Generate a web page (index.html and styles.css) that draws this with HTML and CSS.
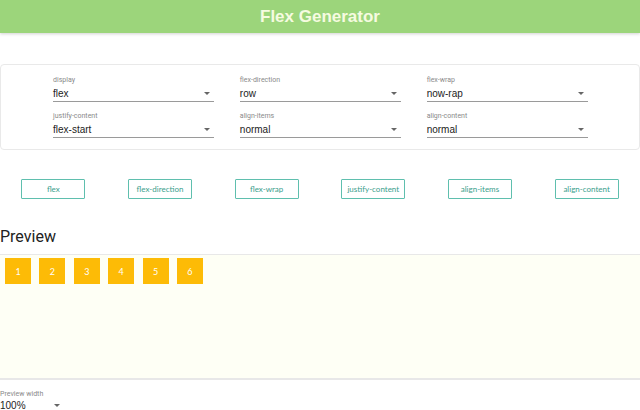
FILE: index.html
```html
<!DOCTYPE html>
<html>
<head>
<meta charset="utf-8">
<link rel="stylesheet" href="styles.css">
</head>
<body>
<header class="topbar"><h1 class="title">Flex Generator</h1></header>

<section class="panel">
  <div class="grid">
    <div class="field"><div class="label">display</div><div class="value"><span>flex</span><span class="arrow"></span></div></div>
    <div class="field"><div class="label">flex-direction</div><div class="value"><span>row</span><span class="arrow"></span></div></div>
    <div class="field"><div class="label">flex-wrap</div><div class="value"><span>now-rap</span><span class="arrow"></span></div></div>
    <div class="field"><div class="label">justify-content</div><div class="value"><span>flex-start</span><span class="arrow"></span></div></div>
    <div class="field"><div class="label">align-items</div><div class="value"><span>normal</span><span class="arrow"></span></div></div>
    <div class="field"><div class="label">align-content</div><div class="value"><span>normal</span><span class="arrow"></span></div></div>
  </div>
</section>

<nav class="buttons">
  <button class="btn">flex</button>
  <button class="btn">flex-direction</button>
  <button class="btn">flex-wrap</button>
  <button class="btn">justify-content</button>
  <button class="btn">align-items</button>
  <button class="btn">align-content</button>
</nav>

<h2 class="heading">Preview</h2>
<div class="preview">
  <div class="item">1</div>
  <div class="item">2</div>
  <div class="item">3</div>
  <div class="item">4</div>
  <div class="item">5</div>
  <div class="item">6</div>
</div>

<div class="width-field">
  <div class="label">Preview width</div>
  <div class="value small"><span>100%</span><span class="arrow"></span></div>
</div>
</body>
</html>
```
FILE: styles.css
```css
* { box-sizing: border-box; }
html, body { margin: 0; padding: 0; background: #fff; }
body { font-family: Roboto, "Liberation Sans", Arial, sans-serif; color: #222; width: 640px; height: 410px; overflow: hidden; }

.topbar {
  height: 33px;
  background: #9cd57b;
  box-shadow: 0 1px 3px rgba(0,0,0,0.18);
  display: flex;
  align-items: center;
  justify-content: center;
}
.title {
  margin: 0;
  font-family: "Liberation Sans", Arial, sans-serif;
  font-size: 17px;
  font-weight: bold;
  color: #f6fbe0;
}

.panel {
  margin-top: 31px;
  border: 1px solid #e9e9e9;
  border-radius: 4px;
  padding: 11px 51px 11px 52px;
}
.grid {
  display: grid;
  grid-template-columns: repeat(3, 1fr);
  column-gap: 25.5px;
  row-gap: 10px;
}
.label {
  font-size: 7px;
  line-height: 8px;
  color: #8a8a8a;
}
.value {
  margin-top: 2px;
  height: 16px;
  display: flex;
  align-items: center;
  justify-content: space-between;
  font-family: "Liberation Sans", Arial, sans-serif;
  font-size: 10px;
  color: #222;
  border-bottom: 1px solid #9a9a9a;
  padding-bottom: 1px;
}
.arrow {
  width: 0; height: 0;
  border-left: 3px solid transparent;
  border-right: 3px solid transparent;
  border-top: 3px solid #666;
  margin-right: 4px;
}

.buttons {
  margin-top: 29px;
  display: flex;
  justify-content: space-around;
}
.btn {
  width: 64px;
  height: 20px;
  padding: 0;
  background: #fff;
  border: 1px solid #5fbfae;
  border-radius: 1px;
  color: #3a9e8c;
  font-family: Lato, "Open Sans", sans-serif;
  font-size: 8px;
}

.heading {
  margin: 29px 0 0;
  font-size: 16px;
  font-weight: normal;
  line-height: 18px;
  color: #222;
}
.preview {
  margin-top: 8px;
  height: 126px;
  background: #fefff5;
  border-top: 1px solid #e8e8e8;
  border-bottom: 2px solid #e8e8e8;
  padding: 3px 5px;
  display: flex;
  align-items: flex-start;
  gap: 8.4px;
}
.item {
  width: 26px;
  height: 26px;
  background: #fdbb06;
  color: #fff;
  font-size: 9px;
  font-family: Lato, "Open Sans", sans-serif;
  display: flex;
  align-items: center;
  justify-content: center;
}

.width-field {
  margin-top: 10px;
  width: 64px;
}
.value.small {
  border-bottom: none;
  margin-top: 1px;
  height: 13px;
  padding-bottom: 0;
}
```
